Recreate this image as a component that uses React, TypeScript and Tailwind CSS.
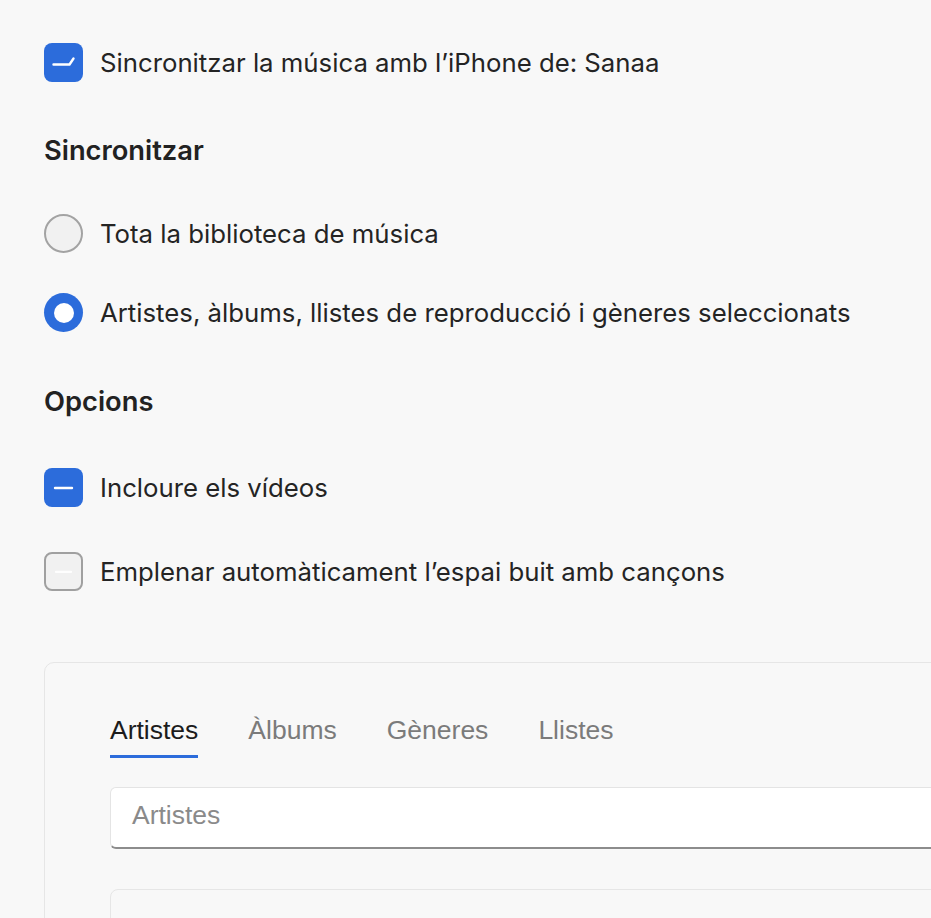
const sans = { fontFamily: 'Inter, "Noto Sans", sans-serif' };

function CheckMark() {
  return (
    <svg viewBox="0 0 39 39" className="h-full w-full">
      <path d="M9.5 21.5H25.5L29.5 15.5" fill="none" stroke="white" strokeWidth="2.4" strokeLinecap="round" strokeLinejoin="round" />
    </svg>
  );
}

function Dash({ faint }: { faint?: boolean }) {
  return (
    <svg viewBox="0 0 39 39" className="h-full w-full">
      <path d="M11 20H28" fill="none" stroke="white" strokeOpacity={faint ? 0.9 : 1} strokeWidth="2.4" strokeLinecap="round" />
    </svg>
  );
}

function Row({ control, label }: { control: React.ReactNode; label: string }) {
  return (
    <div className="flex h-[39px] items-center gap-[17px]">
      {control}
      <span className="text-[25.75px] leading-none text-[#242424]" style={sans}>
        {label}
      </span>
    </div>
  );
}

const tabs = ["Artistes", "Àlbums", "Gèneres", "Llistes"];

export default function App() {
  return (
    <div className="h-[918px] w-[931px] overflow-hidden bg-[#f8f8f8] pl-[44px] pt-[43px]">
      <Row
        label="Sincronitzar la música amb l’iPhone de: Sanaa"
        control={
          <div className="h-[39px] w-[39px] flex-none rounded-[8px] bg-[#2c6cdb]">
            <CheckMark />
          </div>
        }
      />

      <h2 className="mt-[53px] h-[32px] text-[27.3px] font-semibold leading-[32px] text-[#222]" style={sans}>
        Sincronitzar
      </h2>

      <div className="mt-[47px]">
        <Row
          label="Tota la biblioteca de música"
          control={<div className="h-[39px] w-[39px] flex-none rounded-full border-2 border-[#a3a3a3] bg-[#f1f1f1]" />}
        />
      </div>
      <div className="mt-[40px]">
        <Row
          label="Artistes, àlbums, llistes de reproducció i gèneres seleccionats"
          control={
            <div className="flex h-[39px] w-[39px] flex-none items-center justify-center rounded-full bg-[#2c6cdb]">
              <div className="h-[20px] w-[20px] rounded-full bg-white" />
            </div>
          }
        />
      </div>

      <h2 className="mt-[54px] h-[32px] text-[27.3px] font-semibold leading-[32px] text-[#222]" style={sans}>
        Opcions
      </h2>

      <div className="mt-[50px]">
        <Row
          label="Incloure els vídeos"
          control={
            <div className="h-[39px] w-[39px] flex-none rounded-[8px] bg-[#2c6cdb]">
              <Dash />
            </div>
          }
        />
      </div>
      <div className="mt-[45px]">
        <Row
          label="Emplenar automàticament l’espai buit amb cançons"
          control={
            <div className="h-[39px] w-[39px] flex-none rounded-[8px] border-2 border-[#a0a0a0] bg-[#f1f1f1]">
              <Dash faint />
            </div>
          }
        />
      </div>

      <div className="mt-[71px] w-[1000px] rounded-tl-[10px] border border-[#e6e6e6] bg-[#f8f8f8] pl-[65px] pt-[52px]" style={{ fontFamily: '"Liberation Sans", Arial, sans-serif' }}>
        <div className="flex gap-[50px]">
          {tabs.map((t, i) => (
            <div key={t} className="flex flex-col">
              <span className={`h-[30px] text-[26.5px] leading-[30px] ${i === 0 ? "text-[#1c1c1c]" : "text-[#7b7b7b]"}`}>{t}</span>
              <div className={`mt-[10px] h-[3px] ${i === 0 ? "bg-[#2c6cdb]" : "bg-transparent"}`} />
            </div>
          ))}
        </div>

        <div className="mt-[29px] flex h-[62px] items-center rounded-[6px] border border-b-2 border-[#e4e4e4] border-b-[#8c8c8c] bg-white pb-[5px] pl-[21px]">
          <span className="text-[26.5px] leading-[30px] text-[#8a8a8a]">Artistes</span>
        </div>

        <div className="mt-[40px] h-[80px] rounded-[8px] border border-[#e6e6e6] bg-[#f8f8f8]" />
      </div>
    </div>
  );
}
